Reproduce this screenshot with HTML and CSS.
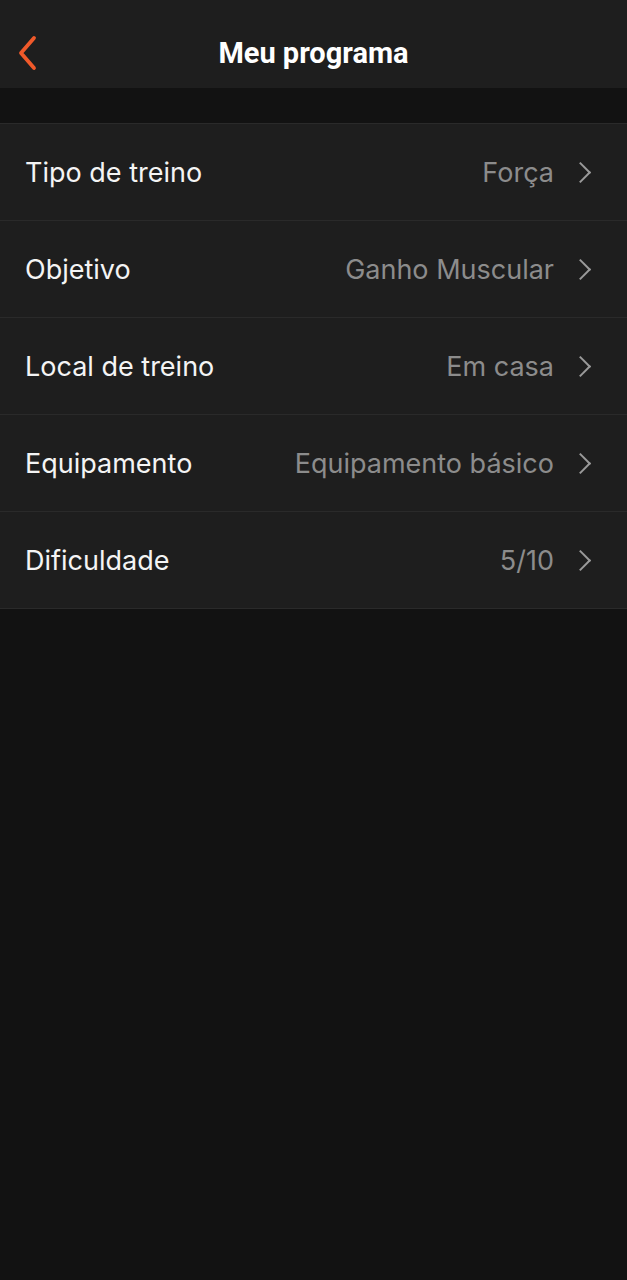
FILE: index.html
```html
<!DOCTYPE html>
<html lang="pt">
<head>
  <meta charset="UTF-8" />
  <meta name="viewport" content="width=device-width, initial-scale=1.0" />
  <title>Meu programa</title>
  <link rel="stylesheet" href="styles.css">
</head>
<body>
  <header class="topbar">
    <button class="back" aria-label="Voltar">
      <svg width="26" height="38" viewBox="0 0 26 38"><path d="M19 4 L6 19 L19 34" fill="none" stroke="#f0592a" stroke-width="3.8" stroke-linecap="round" stroke-linejoin="round"/></svg>
    </button>
    <h1>Meu programa</h1>
  </header>

  <ul class="settings">
    <li class="row"><span class="label">Tipo de treino</span><span class="value">Força</span><span class="chev"></span></li>
    <li class="row"><span class="label">Objetivo</span><span class="value">Ganho Muscular</span><span class="chev"></span></li>
    <li class="row"><span class="label">Local de treino</span><span class="value">Em casa</span><span class="chev"></span></li>
    <li class="row"><span class="label">Equipamento</span><span class="value">Equipamento básico</span><span class="chev"></span></li>
    <li class="row"><span class="label">Dificuldade</span><span class="value">5/10</span><span class="chev"></span></li>
  </ul>
</body>
</html>
```

FILE: styles.css
```css
body { margin: 0; background: #121212; font-family: Inter, "Noto Sans", sans-serif; color: #fff; }
.topbar { height: 88px; box-sizing: border-box; padding-top: 18px; background: #1e1e1e; display: flex; align-items: center; justify-content: center; position: relative; }
.topbar h1 { margin: 0; font-family: Roboto, sans-serif; font-weight: 700; font-size: 29px; }
.back { position: absolute; left: 15px; top: 34px; background: none; border: none; padding: 0; }
.settings { list-style: none; margin: 35px 0 0; padding: 0; border-top: 1px solid #2a2a2a; }
.row { height: 96px; background: #1e1e1e; border-bottom: 1px solid #2a2a2a; display: flex; align-items: center; padding: 0 39px 0 25px; }
.label { flex: 1; font-size: 27px; color: #f4f4f4; }
.value { font-size: 27px; color: #8c8c8c; margin-right: 19px; }
.chev { width: 13px; height: 13px; border-top: 2.6px solid #9a9a9a; border-right: 2.6px solid #9a9a9a; transform: rotate(45deg); }
```
